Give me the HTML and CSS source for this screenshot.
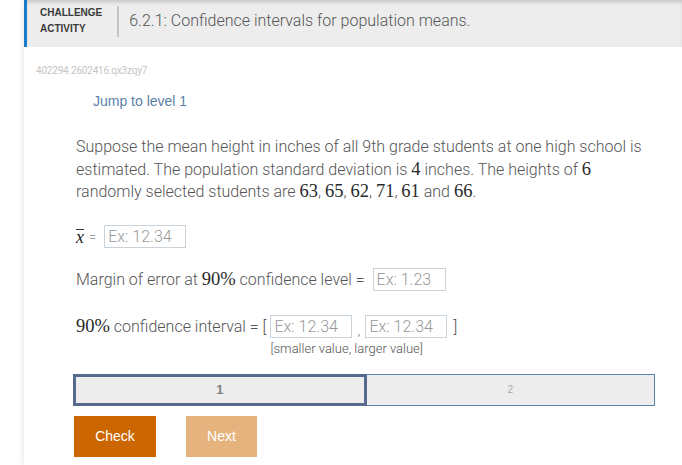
FILE: index.html
```html
<!DOCTYPE html>
<html>
<head>
<meta charset="utf-8">
<link rel="stylesheet" href="styles.css">
</head>
<body>
<div class="card">
  <header class="head">
    <div class="label">CHALLENGE<br>ACTIVITY</div>
    <div class="divider"></div>
    <h1 class="title">6.2.1: Confidence intervals for population means.</h1>
  </header>
  <div class="body">
    <div class="ident">402294.2602416.qx3zqy7</div>
    <div class="jump">Jump to level 1</div>
    <div class="content">
      <p class="question">Suppose the mean height in inches of all 9th grade students at one high school is estimated. The population standard deviation is <span class="m">4</span> inches. The heights of <span class="m">6</span> randomly selected students are <span class="m">63</span>, <span class="m">65</span>, <span class="m">62</span>, <span class="m">71</span>, <span class="m">61</span> and <span class="m">66</span>.</p>
      <div class="row row-mean">
        <span class="mi">x</span><span class="eq">=</span>
        <span class="field w82">Ex: 12.34</span>
      </div>
      <div class="row row-moe">
        <span>Margin of error at <span class="m">90%</span> confidence level =</span>
        <span class="field w73">Ex: 1.23</span>
      </div>
      <div class="row row-ci">
        <span class="ci-label"><span class="m">90%</span> confidence interval = [</span>
        <div class="ci-group">
          <div class="ci-inputs">
            <span class="field w82">Ex: 12.34</span>
            <span class="comma">,</span>
            <span class="field w82">Ex: 12.34</span>
            <span class="bracket">]</span>
          </div>
          <div class="hint">[smaller value, larger value]</div>
        </div>
      </div>
      <div class="levels">
        <div class="level current">1</div>
        <div class="level next">2</div>
      </div>
      <div class="buttons">
        <div class="btn check">Check</div>
        <div class="btn next-btn">Next</div>
      </div>
    </div>
  </div>
</div>
</body>
</html>
```

FILE: styles.css
```css
html, body {
  margin: 0;
  padding: 0;
  background: #ffffff;
}
body {
  font-family: Roboto, "Liberation Sans", sans-serif;
  color: #555;
  height: 465px;
  overflow: hidden;
}
.card {
  margin-left: 24px;
  height: 465px;
  box-shadow: -3px 0 3px rgba(0, 0, 0, 0.05);
}
.head {
  height: 47px;
  box-sizing: border-box;
  background: #ededed;
  border-left: 3px solid #1b7cc8;
  box-shadow: inset 0 4px 4px -2px rgba(0, 0, 0, 0.18);
  display: flex;
  align-items: flex-start;
  padding: 5px 0 0 13px;
}
.label {
  font-family: "Liberation Sans", Arial, sans-serif;
  font-weight: bold;
  font-size: 10px;
  line-height: 16px;
  color: #3a3a3a;
}
.divider {
  width: 2px;
  height: 31px;
  background: #c3c3c3;
  margin: 1px 10px 0 15px;
}
.title {
  margin: 0;
  font-size: 16px;
  font-weight: 300;
  line-height: 32px;
  color: #555;
}
.body {
  padding: 0 12px;
}
.ident {
  margin-top: 19px;
  font-family: Roboto, sans-serif;
  font-size: 10px;
  line-height: 10px;
  letter-spacing: -0.2px;
  color: #c4c4c4;
}
.jump {
  margin: 15px 0 0 57px;
  font-family: "Liberation Sans", Arial, sans-serif;
  font-size: 14px;
  line-height: 20px;
  color: #5b7fa6;
}
.content {
  margin-left: 37px;
  width: 582px;
}
.question {
  margin: 25px 0 0 3px;
  font-size: 16px;
  font-weight: 300;
  line-height: 22.5px;
  color: #555;
}
.m {
  font-family: "Liberation Serif", "DejaVu Serif", serif;
  font-weight: normal;
  font-size: 18.5px;
  line-height: 1;
  color: #2a2a2a;
}
.mi {
  display: inline-block;
  font-family: "Liberation Serif", serif;
  font-style: italic;
  font-weight: normal;
  font-size: 18px;
  line-height: 12px;
  padding-top: 1px;
  border-top: 1px solid #333;
  color: #222;
}
.row {
  display: flex;
  align-items: center;
  margin-left: 3px;
  font-size: 16px;
  font-weight: 300;
  line-height: 23px;
}
.row-mean {
  margin-top: 21px;
}
.eq {
  font-size: 13px;
  margin: 0 8px 0 5px;
}
.row-moe {
  margin-top: 20px;
}
.row-moe .field {
  margin-left: 8px;
}
.field {
  box-sizing: border-box;
  height: 23px;
  border: 1px solid #c9d3dc;
  padding: 0 3px;
  font-size: 16px;
  font-weight: 300;
  line-height: 21px;
  color: #999;
  background: #fff;
}
.w82 {
  width: 82px;
}
.w73 {
  width: 73px;
}
.row-ci {
  margin-top: 24px;
  align-items: flex-start;
}
.ci-label {
  line-height: 23px;
  margin-right: 4px;
}
.ci-inputs {
  display: flex;
  align-items: flex-start;
  height: 23px;
}
.comma {
  width: 13px;
  text-align: center;
  font-size: 12px;
  line-height: 14px;
  padding-top: 9px;
}
.bracket {
  line-height: 23px;
  margin-left: 6px;
}
.hint {
  margin-top: 3px;
  font-size: 13px;
  line-height: 16px;
  color: #555;
}
.levels {
  display: flex;
  margin-top: 17px;
  height: 32px;
}
.level {
  flex: 1;
  box-sizing: border-box;
  background: #ededed;
  display: flex;
  align-items: center;
  justify-content: center;
  font-family: "Liberation Sans", Arial, sans-serif;
}
.current {
  border: 3px solid #566b8d;
  font-weight: bold;
  font-size: 13px;
  color: #808080;
}
.next {
  border: 1px solid #5c82aa;
  border-left: none;
  font-size: 10px;
  color: #aaa;
}
.buttons {
  display: flex;
  gap: 30px;
  margin: 10px 0 0 1px;
}
.btn {
  height: 41px;
  display: flex;
  align-items: center;
  justify-content: center;
  font-family: "Liberation Sans", Arial, sans-serif;
  font-size: 14px;
  color: #fff;
}
.check {
  width: 82px;
  background: #cc6600;
}
.next-btn {
  width: 71px;
  background: #e6b37f;
}
```
